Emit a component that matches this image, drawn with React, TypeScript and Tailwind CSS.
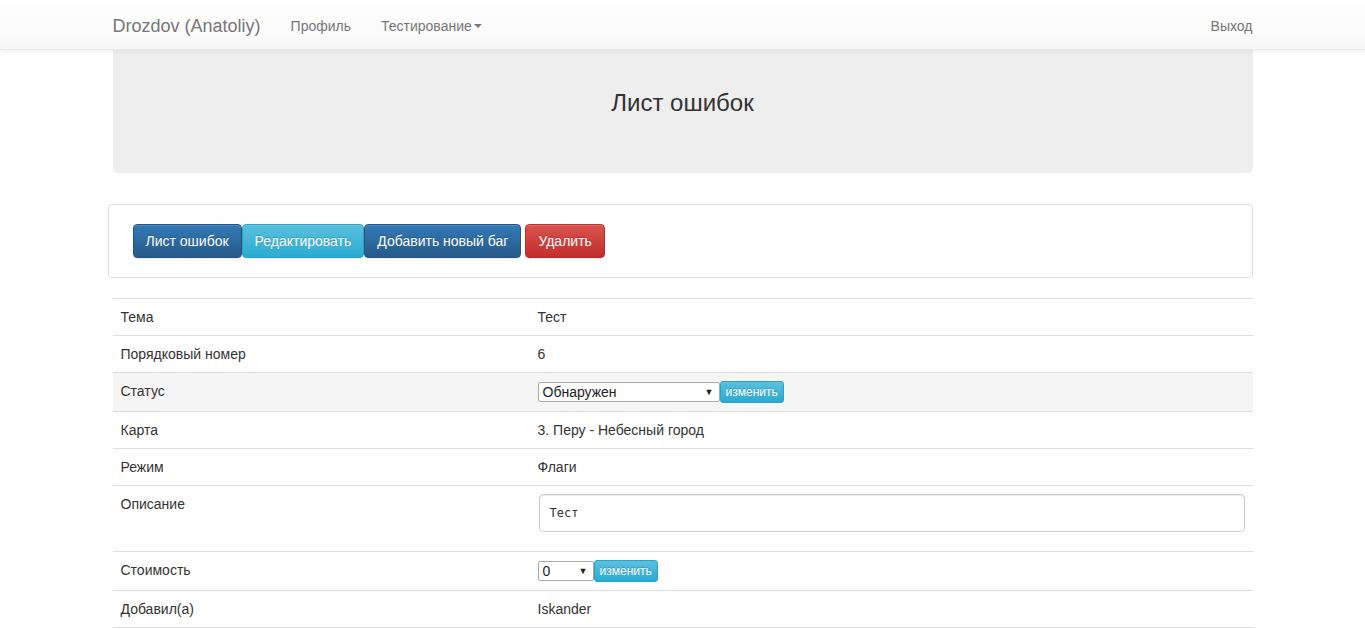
import * as React from "react";

const btnBase =
  "inline-flex items-center h-[34px] px-[12px] text-[14px] text-white rounded-[4px] border [text-shadow:0_-1px_0_rgba(0,0,0,0.2)] shadow-[inset_0_1px_0_rgba(255,255,255,0.15),0_1px_1px_rgba(0,0,0,0.075)]";
const btnPrimary = "bg-[linear-gradient(to_bottom,#337ab7_0,#265a88_100%)] border-[#245580]";
const btnInfo = "bg-[linear-gradient(to_bottom,#5bc0de_0,#2aabd2_100%)] border-[#28a4c9]";
const btnDanger = "bg-[linear-gradient(to_bottom,#d9534f_0,#c12e2a_100%)] border-[#b92c28]";

function FakeSelect({ value, width }: { value: string; width: string }) {
  return (
    <div
      className={`${width} h-[20px] flex items-center justify-between border border-[#a9a9a9] rounded-[2px] bg-white pl-[4px] pr-[5px] text-[14px] text-[#222]`}
    >
      <span className="leading-none">{value}</span>
      <span className="text-[9px] leading-none text-[#222]">▼</span>
    </div>
  );
}

function ChangeButton() {
  return (
    <button
      className={`h-[22px] px-[5px] text-[12px] leading-[18px] text-white rounded-[3px] border ${btnInfo} [text-shadow:0_-1px_0_rgba(0,0,0,0.2)]`}
    >
      изменить
    </button>
  );
}

interface Row {
  label: string;
  value: React.ReactNode;
  highlight?: boolean;
  tall?: boolean;
}

export default function App() {
  const rows: Row[] = [
    { label: "Тема", value: "Тест" },
    { label: "Порядковый номер", value: "6" },
    {
      label: "Статус",
      highlight: true,
      value: (
        <div className="flex items-center">
          <FakeSelect value="Обнаружен" width="w-[182px]" />
          <ChangeButton />
        </div>
      ),
    },
    { label: "Карта", value: "3. Перу - Небесный город" },
    { label: "Режим", value: "Флаги" },
    {
      label: "Описание",
      tall: true,
      value: (
        <div className="ml-[1px] w-[706px] h-[38px] border border-[#ccc] rounded-[4px] shadow-[inset_0_1px_1px_rgba(0,0,0,0.075)] flex items-center pl-[10px] text-[12px] text-[#333] font-['DejaVu_Sans_Mono',monospace]">
          Тест
        </div>
      ),
    },
    {
      label: "Стоимость",
      value: (
        <div className="flex items-center">
          <FakeSelect value="0" width="w-[56px]" />
          <ChangeButton />
        </div>
      ),
    },
    { label: "Добавил(а)", value: "Iskander" },
  ];

  return (
    <div className="h-screen overflow-hidden bg-white font-['Liberation_Sans',Arial,sans-serif] text-[14px] text-[#333]">
      {/* Navbar */}
      <nav className="h-[50px] bg-[linear-gradient(to_bottom,#fff_0,#f8f8f8_100%)] border-b border-[#e7e7e7] shadow-[0_1px_5px_rgba(0,0,0,0.075)] relative z-10">
        <div className="w-[1140px] mx-auto flex items-center h-full pt-[3px]">
          <span className="text-[18px] text-[#777] pr-[15px]">Drozdov (Anatoliy)</span>
          <span className="px-[15px] text-[#777]">Профиль</span>
          <span className="px-[15px] text-[#777] flex items-center">
            Тестирование
            <span className="ml-[2px] w-0 h-0 border-x-[4px] border-x-transparent border-t-[4px] border-t-[#777]" />
          </span>
          <span className="ml-auto text-[#777]">Выход</span>
        </div>
      </nav>

      <div className="w-[1140px] mx-auto">
        {/* Jumbotron */}
        <div className="h-[123px] bg-[#eee] rounded-b-[6px] pt-[40px] text-center">
          <h3 className="text-[24px] leading-[26px] text-[#333]">Лист ошибок</h3>
        </div>

        {/* Actions */}
        <div className="mt-[31px] -ml-[5px] w-[1145px] border border-[#ddd] rounded-[4px] pl-[24px] py-[19px] flex items-center">
          <button className={`${btnBase} ${btnPrimary}`}>Лист ошибок</button>
          <button className={`${btnBase} ${btnInfo}`}>Редактировать</button>
          <button className={`${btnBase} ${btnPrimary}`}>Добавить новый баг</button>
          <button className={`${btnBase} ${btnDanger} ml-[4px]`}>Удалить</button>
        </div>

        {/* Details table */}
        <div className="mt-[20px] border-t border-[#ddd]">
          {rows.map((row) => (
            <div
              key={row.label}
              className={`flex border-b border-[#ddd] ${row.highlight ? "bg-[#f5f5f5]" : ""}`}
            >
              <div className="w-[417px] p-[8px] leading-[20px]">{row.label}</div>
              <div className={`flex-1 px-[8px] pt-[8px] leading-[20px] ${row.tall ? "pb-[19px]" : "pb-[8px]"}`}>
                {row.value}
              </div>
            </div>
          ))}
        </div>
      </div>
    </div>
  );
}
